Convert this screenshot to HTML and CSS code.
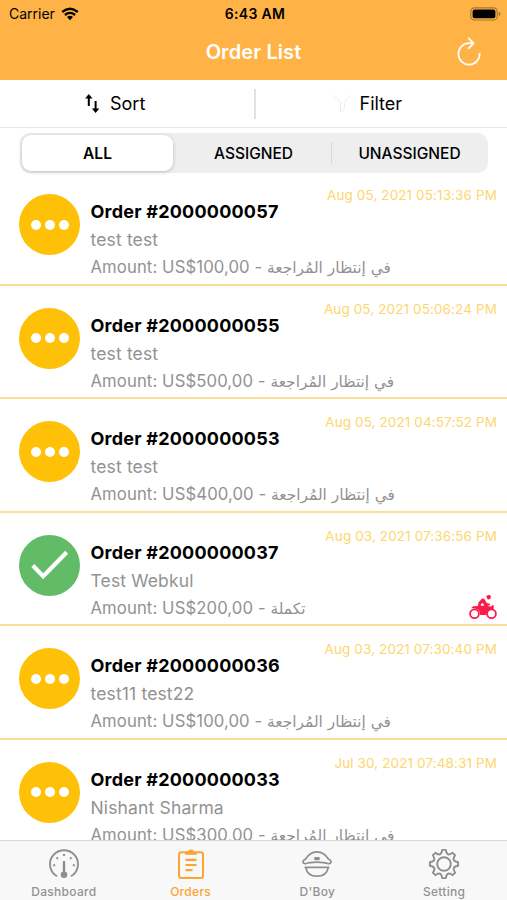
FILE: index.html
```html
<!DOCTYPE html>
<html lang="en">
<head>
    <meta charset="UTF-8">
    <meta name="viewport" content="width=device-width, initial-scale=1.0">
    <title>Order List</title>
    <link rel="stylesheet" href="styles.css">
</head>
<body>
    <div class="app">
        <header class="header">
            <div class="status-bar">
                <div class="carrier">
                    <span>Carrier</span>
                    <svg width="18" height="14" viewBox="0 0 18 14">
                        <path d="M1.2 5Q9-1.6 16.8 5M3.9 8Q9 3.8 14.1 8" fill="none" stroke="#000" stroke-width="2.3"/>
                        <path d="M6 10Q9 7.6 12 10L9 13.2z"/>
                    </svg>
                </div>
                <div class="time">6:43 AM</div>
                <svg class="battery" width="31" height="14" viewBox="0 0 31 14">
                    <rect x=".8" y=".8" width="26.4" height="12.2" rx="3.6" fill="none" stroke="#a9782f" stroke-width="1.2"/>
                    <rect x="2.6" y="2.5" width="22.8" height="8.8" rx="2"/>
                    <path d="M28.6 4.7q2 .7 2 2.2t-2 2.2z" fill="#a9782f"/>
                </svg>
            </div>
            <div class="nav-bar">
                <h1>Order List</h1>
                <svg class="refresh" width="25" height="29" viewBox="0 0 26 30">
                    <path d="M23.6 16.5A11.1 11.1 0 1 1 12.5 6.4h4.8M11.6 .9l5.7 5.5-5.7 5.8" fill="none" stroke="#fff" stroke-width="1.8"/>
                </svg>
            </div>
        </header>

        <div class="toolbar">
            <div class="tool tool-sort">
                <svg width="15" height="19" viewBox="0 0 15 19">
                    <path d="M3.8 12V2M10.6 7v10" fill="none" stroke="#000" stroke-width="2"/>
                    <path d="M3.8 0L7.5 4.6H.1zM10.6 19L6.900 14.400h7.400z"/>
                </svg>
                <span>Sort</span>
            </div>
            <div class="tool tool-filter">
                <svg width="19" height="19" viewBox="0 0 19 19">
                    <path d="M.7 1l6.8 7.2v10l3.8-3V8.2L18.2 1" fill="none" stroke="#ececec" stroke-width="1"/>
                </svg>
                <span>Filter</span>
            </div>
        </div>

        <div class="tabs">
            <div class="segment">
                <div class="segment-item active">ALL</div>
                <div class="segment-item">ASSIGNED</div>
                <div class="segment-item last">UNASSIGNED</div>
            </div>
        </div>

        <main class="orders">
            <div class="order">
                <div class="badge pending"><i></i><i></i><i></i></div>
                <div class="info">
                    <div class="number">Order #2000000057</div>
                    <div class="customer">test test</div>
                    <div class="amount"><span>Amount: US$100,00 -</span> <span class="state" lang="ar">في إنتظار المُراجعة</span></div>
                </div>
                <div class="side"><div class="date">Aug 05, 2021 05:13:36 PM</div></div>
            </div>
            <div class="order">
                <div class="badge pending"><i></i><i></i><i></i></div>
                <div class="info">
                    <div class="number">Order #2000000055</div>
                    <div class="customer">test test</div>
                    <div class="amount"><span>Amount: US$500,00 -</span> <span class="state" lang="ar">في إنتظار المُراجعة</span></div>
                </div>
                <div class="side"><div class="date">Aug 05, 2021 05:06:24 PM</div></div>
            </div>
            <div class="order">
                <div class="badge pending"><i></i><i></i><i></i></div>
                <div class="info">
                    <div class="number">Order #2000000053</div>
                    <div class="customer">test test</div>
                    <div class="amount"><span>Amount: US$400,00 -</span> <span class="state" lang="ar">في إنتظار المُراجعة</span></div>
                </div>
                <div class="side"><div class="date">Aug 05, 2021 04:57:52 PM</div></div>
            </div>
            <div class="order">
                <div class="badge complete">
                    <svg width="38" height="30" viewBox="0 0 38 30">
                        <path d="M1.800 15.500l10.400 10.700L35.700 2.300" fill="none" stroke="#fff" stroke-width="4.200"/>
                    </svg>
                </div>
                <div class="info">
                    <div class="number">Order #2000000037</div>
                    <div class="customer">Test Webkul</div>
                    <div class="amount"><span>Amount: US$200,00 -</span> <span class="state" lang="ar">تكملة</span></div>
                </div>
                <div class="side">
                    <div class="date">Aug 03, 2021 07:36:56 PM</div>
                    <svg class="bike" width="28" height="26" viewBox="0 0 28 26" fill="#fb1a49">
                        <circle cx="5.5" cy="19.8" r="4.4" fill="#fff" stroke="#fb1a49" stroke-width="1.8"/>
                        <circle cx="22.5" cy="19.8" r="4.4" fill="#fff" stroke="#fb1a49" stroke-width="1.8"/>
                        <path d="M16.600 2.200L20.200.8Q22.300 1.500 21.900 3.700 20.900 6 18.700 5.200 17.300 4.300 18 3z"/>
                        <path d="M13.200 4.600q1.600-.4 2.500 1l2 3.500 3.300.6v1.500l-2.800.3 3.300 1.300 2.200-1.700 1 .5v3.200l-5.200 1.500-2.600 4.700h-5.700q0-5-4.200-6.200l-4.800-.8 2-1.800 4.600-.2 1-4z"/>
                        <path d="M11.700 10.300l2-1.300 1.500 2.300-2.500 1z" fill="#fff"/>
                    </svg>
                </div>
            </div>
            <div class="order">
                <div class="badge pending"><i></i><i></i><i></i></div>
                <div class="info">
                    <div class="number">Order #2000000036</div>
                    <div class="customer">test11 test22</div>
                    <div class="amount"><span>Amount: US$100,00 -</span> <span class="state" lang="ar">في إنتظار المُراجعة</span></div>
                </div>
                <div class="side"><div class="date">Aug 03, 2021 07:30:40 PM</div></div>
            </div>
            <div class="order">
                <div class="badge pending"><i></i><i></i><i></i></div>
                <div class="info">
                    <div class="number">Order #2000000033</div>
                    <div class="customer">Nishant Sharma</div>
                    <div class="amount"><span>Amount: US$300,00 -</span> <span class="state" lang="ar">في إنتظار المُراجعة</span></div>
                </div>
                <div class="side"><div class="date">Jul 30, 2021 07:48:31 PM</div></div>
            </div>
        </main>

        <nav class="tab-bar">
            <div class="tab">
                <svg width="32" height="32" viewBox="0 0 32 32" fill="none" stroke="#8e8e8e" stroke-width="1.900">
                    <path d="M9 28.300A14 14 0 1 1 23 28.300"/>
                    <path d="M16 13v12" stroke-width="2.400"/>
                    <circle cx="16" cy="26.800" r="3.300" fill="#8e8e8e" stroke="none"/>
                    <path d="M5.200 17.200h2M24.800 17.200h2M8.500 9.500l1.500 1.300M23.500 9.500L22 10.800M16 6v2"/>
                </svg>
                <span>Dashboard</span>
            </div>
            <div class="tab current">
                <svg width="32" height="32" viewBox="0 0 32 32" fill="none" stroke="#f9a533" stroke-width="2">
                    <rect x="4" y="4.200" width="24" height="25.800" rx="2.500"/>
                    <path d="M10.500 4.500h2.200q.6-2.600 3.300-2.600t3.300 2.600h2.200v1.700h-11z" fill="#f9a533" stroke-width="1"/>
                    <path d="M10.500 11.800h11M10.500 17h11M10.500 22.200h7" stroke-width="2.200"/>
                </svg>
                <span>Orders</span>
            </div>
            <div class="tab">
                <svg width="32" height="32" viewBox="0 0 32 32" fill="none" stroke="#8e8e8e" stroke-width="1.700" stroke-linejoin="round">
                    <path d="M4.300 15.800C1.200 15 1 12.700 4.700 11 8 5.400 11.500 3.800 16 3.800S24 5.400 27.300 11c3.700 1.700 3.500 4 .4 4.800-3-1.100-7-1.600-11.700-1.600s-8.700.5-11.700 1.600z"/>
                    <path d="M3.600 19.300h24.800M4.700 19.300C5.700 25 10 28.200 16 28.200S26.300 25 27.300 19.300"/>
                    <rect x="13.300" y="9" width="5.400" height="3.300" rx=".8" fill="#8e8e8e" stroke="none"/>
                </svg>
                <span>D'Boy</span>
            </div>
            <div class="tab">
                <svg width="32" height="32" viewBox="0 0 32 32" fill="none" stroke="#8e8e8e" stroke-width="1.900" stroke-linejoin="round">
                    <path d="M14.200 1.900h3.600q.6 3.800 2.300 4.400t4.600-1.500l2.500 2.500q-2.200 2.900-1.500 4.600t4.400 2.300v3.600q-3.800.6-4.400 2.300t1.500 4.600l-2.500 2.500q-2.900-2.200-4.600-1.500t-2.300 4.400h-3.600q-.6-3.800-2.300-4.400t-4.600 1.500l-2.500-2.500q2.200-2.900 1.500-4.600t-4.400-2.300v-3.600q3.800-.6 4.400-2.300t-1.500-4.600l2.500-2.500q2.900 2.200 4.600 1.500t2.300-4.400z"/>
                    <circle cx="16" cy="16" r="6.800"/>
                </svg>
                <span>Setting</span>
            </div>
        </nav>
    </div>
</body>
</html>
```
FILE: styles.css
```css
* {
    box-sizing: border-box;
}

body {
    margin: 0;
    font-family: Inter, "DejaVu Sans", sans-serif;
    background-color: #fff;
    color: #000;
}

.app {
    display: flex;
    flex-direction: column;
    height: 100vh;
    overflow: hidden;
    white-space: nowrap;
}

.header {
    height: 79.5px;
    flex: none;
    background-color: #ffb347;
}

.status-bar {
    display: grid;
    grid-template-columns: 1fr auto 1fr;
    align-items: center;
    height: 27px;
    padding: 0 6px 0 9px;
    font-size: 14px;
}

.carrier {
    display: flex;
    align-items: center;
    gap: 6px;
}

.time {
    font-weight: 600;
    letter-spacing: 0.3px;
}

.battery {
    justify-self: end;
}

.nav-bar {
    display: grid;
    grid-template-columns: 1fr auto 1fr;
    align-items: center;
    height: 49px;
    padding: 0 25px;
}

.nav-bar h1 {
    grid-column: 2;
    margin: 0;
    font-size: 20px;
    font-weight: 600;
    letter-spacing: 0.1px;
    color: #fff;
}

.refresh {
    justify-self: end;
}

.toolbar {
    display: flex;
    flex: none;
    height: 48.5px;
    border-bottom: 1px solid #e6e6e6;
}

.tool {
    display: flex;
    width: 50%;
    align-items: center;
    gap: 10px;
    font-size: 18px;
}

.tool-sort {
    padding-left: 85px;
}

.tool-filter {
    gap: 8px;
    padding-left: 79px;
    background: linear-gradient(#e2e2e2, #e2e2e2) no-repeat 0 9px / 2px 30px;
}

.tabs {
    flex: none;
    height: 44px;
    padding: 5px 19px 0 20px;
}

.segment {
    display: grid;
    grid-template-columns: 154px 1fr 155px;
    height: 40px;
    padding: 2px;
    border-radius: 10px;
    background-color: #eee;
}

.segment-item {
    display: flex;
    align-items: center;
    justify-content: center;
    font-size: 15.5px;
    font-weight: 500;
}

.segment-item.active {
    width: 151px;
    border-radius: 9px;
    background-color: #fff;
    font-weight: 600;
    box-shadow: 0 1px 4px rgba(0, 0, 0, 0.2);
}

.segment-item.last {
    padding-left: 2px;
    background: linear-gradient(#d8d8d8, #d8d8d8) no-repeat 0 center / 1px 22px;
}

.orders {
    flex: 1;
    min-height: 0;
    overflow: hidden;
}

.order {
    display: flex;
    height: 113.6px;
    padding-left: 19px;
    border-bottom: 2px solid #fbdf96;
}

.badge {
    display: flex;
    flex: none;
    align-items: center;
    justify-content: center;
    gap: 4px;
    width: 61px;
    height: 61px;
    margin-top: 22px;
    border-radius: 50%;
}

.pending {
    background-color: #ffc107;
}

.pending i {
    width: 10px;
    height: 10px;
    border-radius: 50%;
    background-color: #fff;
}

.complete {
    background-color: #62bb66;
}

.info {
    padding: 26px 0 0 10.5px;
}

.number {
    font-size: 18px;
    font-weight: 700;
    line-height: 28px;
    letter-spacing: 0.22px;
}

.customer {
    font-size: 17.5px;
    line-height: 28px;
    letter-spacing: 0.15px;
    color: #929292;
}

.amount {
    height: 27px;
    font-size: 16.7px;
    line-height: 27px;
    letter-spacing: 0.1px;
    color: #929292;
}

.state {
    font-family: "DejaVu Sans", sans-serif;
    font-size: 15.4px;
    letter-spacing: 0;
}

.side {
    display: flex;
    flex: 1;
    flex-direction: column;
    align-items: flex-end;
    justify-content: space-between;
    width: 0;
    padding: 13px 10px 4px 0;
}

.date {
    font-size: 13.5px;
    line-height: 20px;
    letter-spacing: 0.11px;
    color: #fed66f;
}

.bike {
    flex: none;
}

.tab-bar {
    display: flex;
    flex: none;
    height: 60px;
    border-top: 1px solid #d8d8d8;
    background-color: #f8f8f8;
}

.tab {
    display: flex;
    flex: 1;
    flex-direction: column;
    align-items: center;
    padding: 6.5px 0 0 1px;
    font-size: 12px;
    font-weight: 500;
    line-height: 15px;
    letter-spacing: 0.3px;
    color: #929292;
}

.tab span {
    margin-top: 4px;
}

.tab.current {
    color: #f9a533;
}
```
